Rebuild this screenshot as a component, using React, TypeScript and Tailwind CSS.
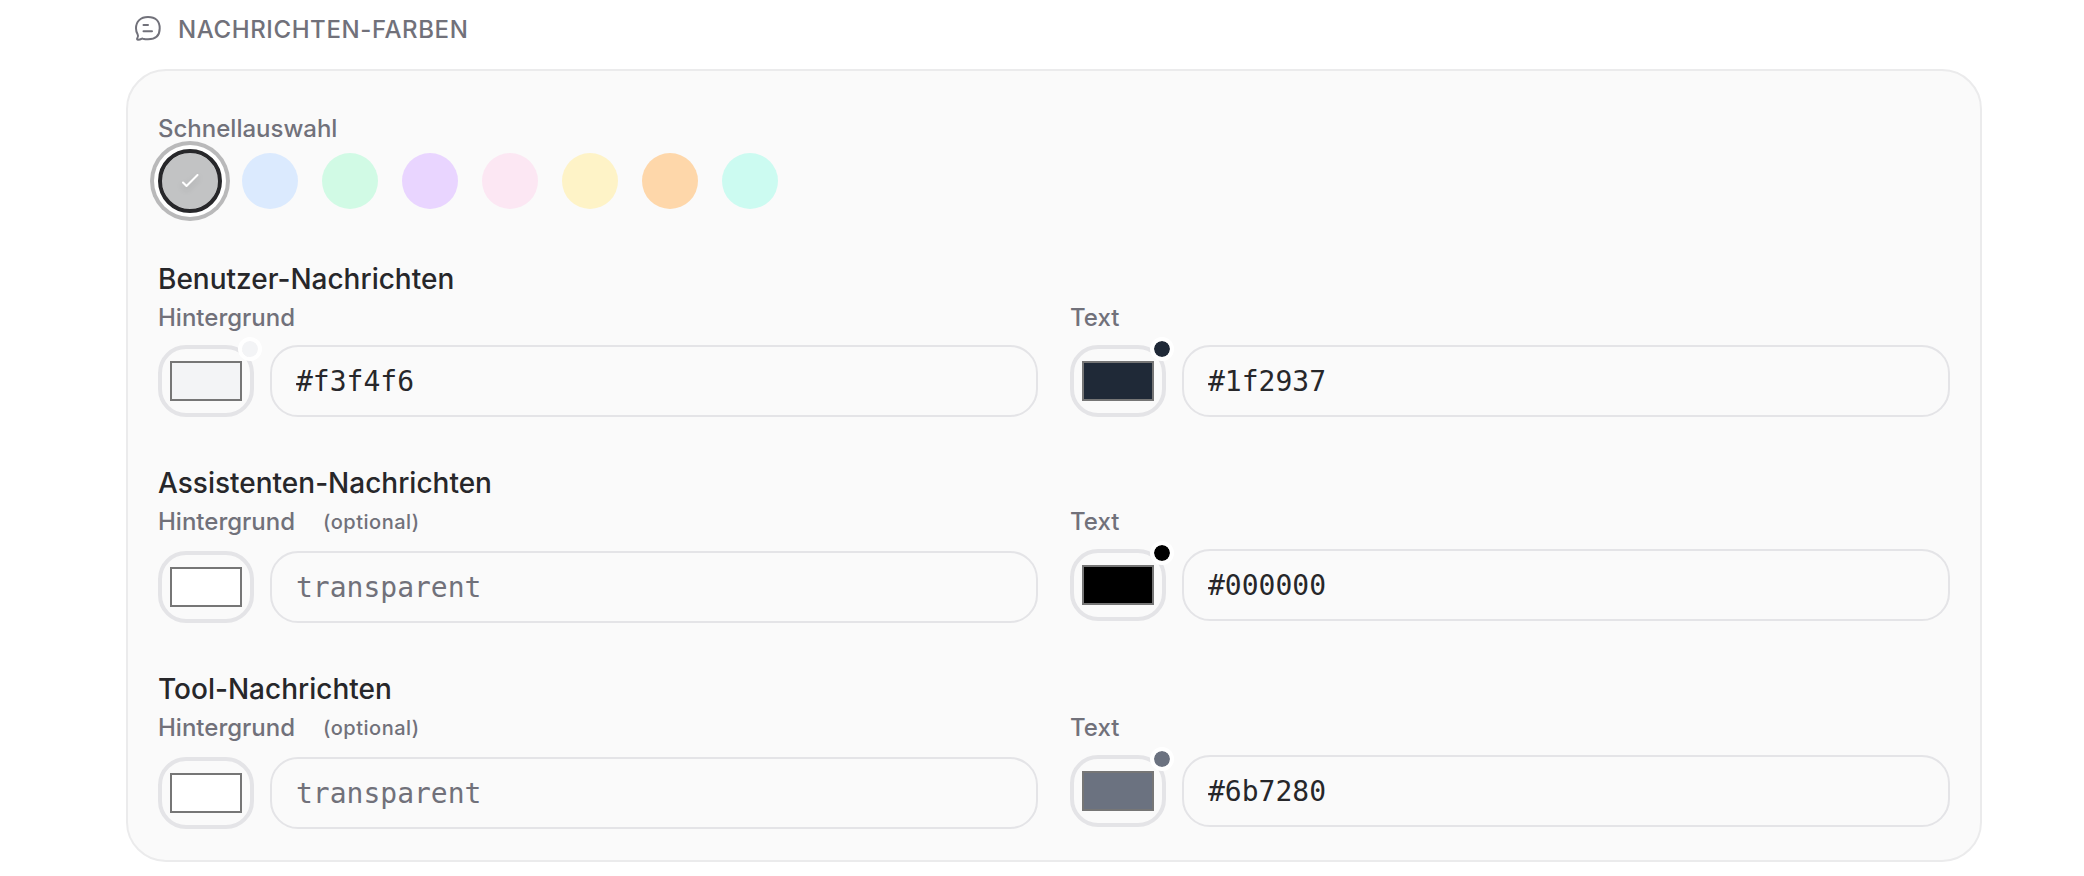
import { useState } from "react";
import { clsx } from "clsx";

type ColorKey =
  | "userBackground"
  | "userText"
  | "assistantBackground"
  | "assistantText"
  | "toolBackground"
  | "toolText";

const PRESETS = [
  { name: "Grau", color: "#f3f4f6" },
  { name: "Blau", color: "#dbeafe" },
  { name: "Grün", color: "#d1fae5" },
  { name: "Lila", color: "#e9d5ff" },
  { name: "Rosa", color: "#fce7f3" },
  { name: "Gelb", color: "#fef3c7" },
  { name: "Orange", color: "#fed7aa" },
  { name: "Türkis", color: "#ccfbf1" },
];

const SECTIONS: { title: string; background: ColorKey; text: ColorKey; optional: boolean }[] = [
  { title: "Benutzer-Nachrichten", background: "userBackground", text: "userText", optional: false },
  { title: "Assistenten-Nachrichten", background: "assistantBackground", text: "assistantText", optional: true },
  { title: "Tool-Nachrichten", background: "toolBackground", text: "toolText", optional: true },
];

function MessageIcon() {
  return (
    <svg
      className="size-8 shrink-0"
      viewBox="0 0 32 32"
      fill="none"
      stroke="currentColor"
      strokeWidth="2"
      strokeLinecap="round"
      strokeLinejoin="round"
      aria-hidden
    >
      <path d="M16 3C8.500 3 4 7.500 4 14.300c0 2.400.6 4.300 1.600 6 .8 1.400.6 2.700-.3 4-.5.800-.2 1.500.8 1.500 1.400 0 2.400-.3 3.300-.9.5-.3.9-.4 1.500-.2 1.500.400 3.200.600 5.100.6 7.500 0 11.700-3.900 11.700-11S23.500 3 16 3Z" />
      <path d="M11.500 11h4.500M11.500 17.300h8.500" />
    </svg>
  );
}

function ColorField({
  id,
  label,
  value,
  optional = false,
  onChange,
}: {
  id: string;
  label: string;
  value: string;
  optional?: boolean;
  onChange: (value: string) => void;
}) {
  return (
    <div className={clsx("flex min-w-0 flex-col", optional ? "gap-[10px]" : "gap-2")}>
      <div className="flex h-[38px] items-center gap-7">
        <label htmlFor={id} className="text-[24px] font-medium text-[#71717a]">
          {label}
        </label>
        {optional && <span className="text-[20px] font-medium tracking-wide text-[#71717a]">(optional)</span>}
      </div>
      <div className="flex gap-4">
        <div className="relative shrink-0">
          <input
            type="color"
            aria-label={`${label} Farbe`}
            value={value || "#ffffff"}
            onChange={(e) => onChange(e.target.value)}
            className="block h-[72px] w-24 cursor-pointer appearance-none rounded-[28px] border-4 border-[#e4e4e7] bg-transparent px-2 py-3 [&::-webkit-color-swatch-wrapper]:p-0 [&::-webkit-color-swatch]:rounded-none [&::-webkit-color-swatch]:border-2 [&::-webkit-color-swatch]:border-[#767676]"
          />
          {value && (
            <span
              className="absolute -top-2 -right-2 size-6 rounded-full border-4 border-white bg-clip-padding"
              style={{ backgroundColor: value }}
            />
          )}
        </div>
        <input
          id={id}
          type="text"
          value={value}
          placeholder="transparent"
          onChange={(e) => onChange(e.target.value)}
          className="h-[72px] min-w-0 flex-1 rounded-[28px] border-2 border-[#e4e4e7] bg-transparent px-6 font-['DejaVu_Sans_Mono',monospace] text-[28px] text-[#27272a] placeholder:text-[#71717a] focus:outline-none"
        />
      </div>
    </div>
  );
}

export default function App() {
  const [colors, setColors] = useState<Record<ColorKey, string>>({
    userBackground: "#f3f4f6",
    userText: "#1f2937",
    assistantBackground: "",
    assistantText: "#000000",
    toolBackground: "",
    toolText: "#6b7280",
  });

  const updateColor = (key: ColorKey, value: string) => {
    setColors((prev) => ({ ...prev, [key]: value }));
  };

  return (
    <main className="min-h-screen bg-white pt-3 pr-[102px] pb-3 pl-[126px] font-['Inter',sans-serif]">
      <div className="mb-[21px] flex h-9 items-center gap-3.5 pl-1.5 text-[#71717a]">
        <MessageIcon />
        <h2 className="text-[24px] font-medium tracking-wide uppercase">Nachrichten-Farben</h2>
      </div>

      <div className="flex flex-col gap-[46px] rounded-[40px] border-2 border-[#ebebec] bg-[#fafafa] px-[30px] pt-10 pb-[31px]">
        <div className="flex flex-col gap-0.5">
          <h3 className="text-[24px] leading-9 font-medium text-[#71717a]">Schnellauswahl</h3>
          <div className="flex gap-4">
            {PRESETS.map((preset) => {
              const selected = preset.color === colors.userBackground;
              return (
                <button
                  key={preset.name}
                  type="button"
                  aria-label={preset.name}
                  aria-pressed={selected}
                  onClick={() => updateColor("userBackground", preset.color)}
                  className={clsx(
                    "size-16 cursor-pointer rounded-full border-4 bg-clip-padding",
                    selected
                      ? "border-[#27272a] ring-4 ring-[#b9b9ba] ring-offset-4 ring-offset-white"
                      : "border-transparent",
                  )}
                  style={{ backgroundColor: preset.color }}
                >
                  {selected && (
                    <span className="flex size-full items-center justify-center rounded-full bg-black/20 text-white">
                      <svg
                        className="size-6 drop-shadow-md"
                        viewBox="0 0 24 24"
                        fill="none"
                        stroke="currentColor"
                        strokeWidth="2"
                        strokeLinecap="round"
                        strokeLinejoin="round"
                        aria-hidden
                      >
                        <path d="M5 13.500 8.500 17 19.500 6" />
                      </svg>
                    </span>
                  )}
                </button>
              );
            })}
          </div>
        </div>

        {SECTIONS.map((section) => (
          <section key={section.title}>
            <h3 className="text-[28px] leading-10 font-medium text-[#27272a]">{section.title}</h3>
            <div className="grid grid-cols-2 gap-8">
              <ColorField
                id={section.background}
                label="Hintergrund"
                value={colors[section.background]}
                optional={section.optional}
                onChange={(value) => updateColor(section.background, value)}
              />
              <ColorField
                id={section.text}
                label="Text"
                value={colors[section.text]}
                onChange={(value) => updateColor(section.text, value)}
              />
            </div>
          </section>
        ))}
      </div>
    </main>
  );
}
